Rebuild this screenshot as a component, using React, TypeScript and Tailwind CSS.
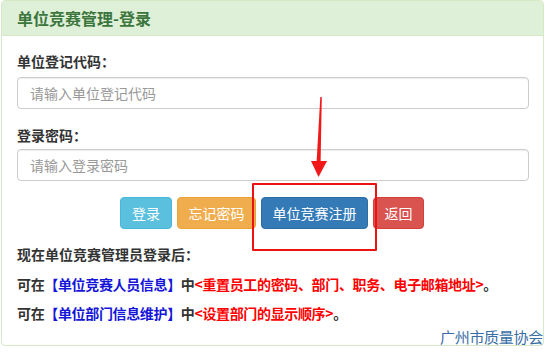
import React from "react";

const font = { fontFamily: '"Noto Sans CJK SC", "Noto Sans", sans-serif' };

export default function App() {
  return (
    <div className="relative w-[554px] h-[353px] bg-white text-[#333]" style={font}>
      {/* Panel */}
      <div className="ml-[1px] w-[543px] h-[346px] border border-[#d6e9c6] rounded-[4px] flex flex-col overflow-hidden">
        {/* Header */}
        <div className="h-[35px] shrink-0 bg-[#dff0d8] border-b border-[#d6e9c6] px-[15px] flex items-center">
          <span className="text-[16px] leading-[20px] font-bold text-[#3c763d]">单位竞赛管理-登录</span>
        </div>

        {/* Body */}
        <div className="flex flex-col px-[15px] pt-[15px]">
          <label className="text-[14px] leading-[20px] font-bold mb-[6px]">单位登记代码：</label>
          <input
            placeholder="请输入单位登记代码"
            className="h-[32px] w-[512px] border border-[#ccc] rounded-[4px] px-[12px] text-[14px] placeholder:text-[#999] shadow-[inset_0_1px_1px_rgba(0,0,0,0.075)] outline-none"
          />

          <label className="text-[14px] leading-[20px] font-bold mt-[16px] mb-[4px]">登录密码：</label>
          <input
            placeholder="请输入登录密码"
            className="h-[32px] w-[512px] border border-[#ccc] rounded-[4px] px-[12px] text-[14px] placeholder:text-[#999] shadow-[inset_0_1px_1px_rgba(0,0,0,0.075)] outline-none"
          />

          <div className="flex gap-[5px] mt-[16px] ml-[103px] text-[14px] text-white">
            <button className="h-[32px] w-[52px] rounded-[4px] bg-[#5bc0de] border border-[#46b8da]">登录</button>
            <button className="h-[32px] w-[79px] rounded-[4px] bg-[#f0ad4e] border border-[#eea236]">忘记密码</button>
            <button className="h-[32px] w-[107px] rounded-[4px] bg-[#337ab7] border border-[#2e6da4]">单位竞赛注册</button>
            <button className="h-[32px] w-[51px] rounded-[4px] bg-[#d9534f] border border-[#d43f3a]">返回</button>
          </div>

          <p className="mt-[15px] text-[14px] leading-[20px] font-bold">现在单位竞赛管理员登录后：</p>
          <p className="mt-[10px] text-[14px] leading-[20px] font-bold tracking-[-0.35px]">
            可在<span className="text-[#1515d9]">【单位竞赛人员信息】</span>中
            <span className="text-[#ff0000]">&lt;重置员工的密码、部门、职务、电子邮箱地址&gt;</span>。
          </p>
          <p className="mt-[9px] text-[14px] leading-[20px] font-bold tracking-[-0.35px]">
            可在<span className="text-[#1515d9]">【单位部门信息维护】</span>中
            <span className="text-[#ff0000]">&lt;设置部门的显示顺序&gt;</span>。
          </p>
        </div>
      </div>

      {/* Footer mark */}
      <span className="absolute left-[440px] top-[327px] text-[15px] leading-[20px] text-[#3a6ea5] tracking-[-0.3px]">
        广州市质量协会
      </span>

      {/* Annotation: red box */}
      <div className="absolute left-[252px] top-[183px] w-[125px] h-[68px] border-2 border-[#ee1111] rounded-[1px]" />

      {/* Annotation: arrow */}
      <svg className="absolute left-[305px] top-[95px]" width="30" height="85" viewBox="0 0 30 85">
        <polygon points="15.3,2 16.8,2 15.6,67 11.6,67" fill="#f01818" />
        <polygon points="6,66 22,66 13.5,82" fill="#f01818" />
      </svg>
    </div>
  );
}
